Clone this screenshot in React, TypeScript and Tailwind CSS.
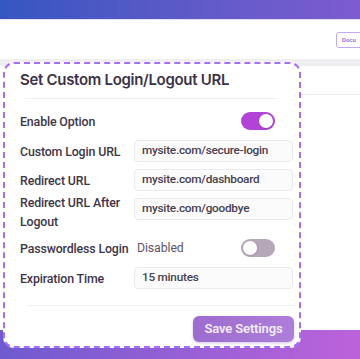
import React from "react";

function Toggle({ on }: { on: boolean }) {
  return (
    <div
      className={
        on
          ? "flex h-[18px] w-[34px] items-center justify-end rounded-full bg-[#b144d6] px-[2px]"
          : "flex h-[18px] w-[34px] items-center justify-start rounded-full bg-[#b5a7b8] px-[2px]"
      }
    >
      <div className="h-[14px] w-[14px] rounded-full bg-white shadow-sm" />
    </div>
  );
}

function Field({ value }: { value: string }) {
  return (
    <div className="flex h-[22px] w-[159px] items-center rounded-[4px] border border-[#ebe9ee] bg-[#fbfbfc] pl-[7px] text-[11.8px] tracking-[-0.25px] text-[#47404f]">
      {value}
    </div>
  );
}

function Row({ label, children, className }: { label: React.ReactNode; children: React.ReactNode; className: string }) {
  return (
    <div className={"flex items-center " + className}>
      <div className="w-[114px] whitespace-nowrap leading-[19px]">{label}</div>
      {children}
    </div>
  );
}

export default function App() {
  return (
    <div className="relative h-[359px] w-[360px] overflow-hidden bg-white font-['Roboto',sans-serif]">
      <div className="h-[19px] bg-gradient-to-r from-[#3456c0] to-[#7d5ccf]" />
      <div className="flex h-[40px] items-center justify-end border-t border-[#e4e0f0] bg-white">
        <div className="mr-[-30px] flex h-[16px] w-[54px] items-center rounded-[3px] border border-[#c2a9f3] pl-[5px] text-[6px] font-semibold text-[#8b6cd6]">
          Docu
        </div>
      </div>
      <div className="h-[7px] bg-[#efeff1]" />
      <div className="flex h-[264px] flex-col">
        <div className="ml-[300px] mt-[28px] h-px bg-[#ece9f3]" />
      </div>
      <div className="h-[29px] bg-gradient-to-r from-[#6f5ad0] to-[#bc62da]" />

      <div className="absolute left-[3px] top-[62px] flex h-[286px] w-[298px] flex-col rounded-[11px] border-2 border-dashed border-[#a66ff5] bg-white pl-[15px] pr-[5px] text-[12.4px] font-medium tracking-[-0.15px] text-[#3e3648]">
        <div className="pt-[6px] font-['Inter',sans-serif] text-[15px] font-semibold leading-[20px] tracking-[-0.3px] text-[#3b3247]">
          Set Custom Login/Logout URL
        </div>
        <div className="ml-[5px] mr-[16px] mt-[8px] h-px bg-[#f1eff3]" />
        <Row label="Enable Option" className="mt-[13px] h-[18px]">
          <div className="flex w-[159px] justify-end pr-[18px]">
            <Toggle on />
          </div>
        </Row>
        <Row label="Custom Login URL" className="mt-[10px] h-[22px]">
          <Field value="mysite.com/secure-login" />
        </Row>
        <Row label="Redirect URL" className="mt-[7px] h-[22px]">
          <Field value="mysite.com/dashboard" />
        </Row>
        <div className="mt-[7px] flex items-start">
          <div className="mt-[-5px] w-[114px] leading-[19px]">
            Redirect URL After
            <br />
            Logout
          </div>
          <Field value="mysite.com/goodbye" />
        </div>
        <Row label="Passwordless Login" className="mt-[8px] h-[18px]">
          <div className="flex w-[159px] items-center justify-between pl-[3px] pr-[18px]">
            <span className="text-[12.3px] font-normal tracking-[-0.1px] text-[#5d5566]">Disabled</span>
            <Toggle on={false} />
          </div>
        </Row>
        <Row label="Expiration Time" className="mt-[10px] h-[22px]">
          <Field value="15 minutes" />
        </Row>
        <div className="ml-[8px] mt-[16px] h-px bg-[#f1eff3]" />
        <div className="mt-[10px] flex justify-end">
          <div className="flex h-[26px] w-[101px] items-center justify-center rounded-[6px] bg-gradient-to-r from-[#9c6ccf] to-[#ad7ed9] text-[13px] font-semibold text-[#f3ecfb] shadow-[0_1px_3px_rgba(120,80,170,0.35)]">
            Save Settings
          </div>
        </div>
      </div>
    </div>
  );
}
